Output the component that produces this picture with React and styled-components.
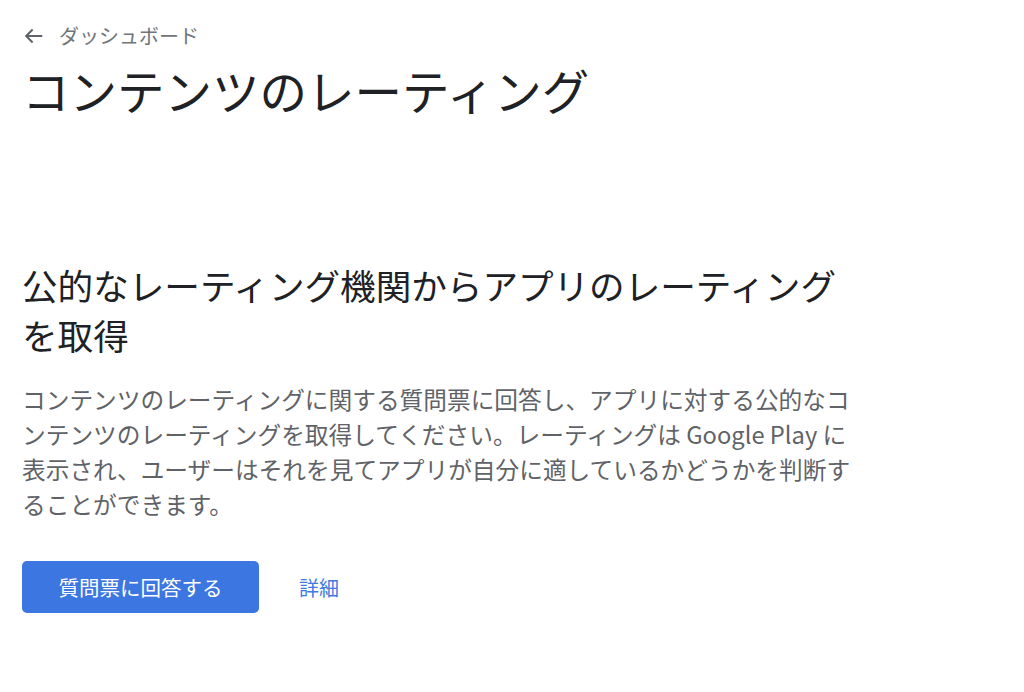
import React from 'react';
import styled, { createGlobalStyle } from 'styled-components';

const GlobalStyle = createGlobalStyle`
  html, body {
    margin: 0;
    padding: 0;
    background: #ffffff;
  }
  body {
    font-family: "Noto Sans CJK JP", "Noto Sans", sans-serif;
    color: #202124;
  }
`;

const Page = styled.main`
  padding: 24px 22px 0;
  display: flex;
  flex-direction: column;
`;

const Breadcrumb = styled.a`
  display: flex;
  align-items: center;
  gap: 14px;
  height: 24px;
  font-size: 20px;
  line-height: 24px;
  color: #70757a;
  text-decoration: none;
  svg {
    margin-left: 1px;
  }
`;

const Title = styled.h1`
  margin: 14px 0 0;
  font-size: 47.5px;
  line-height: 56px;
  font-weight: 400;
  color: #202124;
`;

const Section = styled.section`
  margin-top: 142px;
  max-width: 840px;
`;

const Heading = styled.h2`
  margin: 0;
  max-width: 835px;
  font-size: 35.6px;
  line-height: 50px;
  font-weight: 400;
  color: #202124;
`;

const Body = styled.p`
  margin: 22px 0 0;
  font-size: 23.7px;
  line-height: 35px;
  color: #5f6368;
`;

const Actions = styled.div`
  margin-top: 39px;
  display: flex;
  align-items: center;
  gap: 40px;
`;

const PrimaryButton = styled.button`
  width: 237px;
  height: 52px;
  border: none;
  border-radius: 5px;
  background: #3b76e1;
  color: #ffffff;
  font-family: inherit;
  font-size: 20.5px;
  cursor: pointer;
`;

const TextLink = styled.a`
  font-size: 20px;
  color: #3f7ae0;
  text-decoration: none;
`;

const BackArrow = () => (
  <svg width="22" height="22" viewBox="0 0 24 24" fill="none" stroke="#5f6368" strokeWidth="2.2">
    <path d="M21 12H3.5" />
    <path d="M10.5 5l-7 7 7 7" />
  </svg>
);

export default function App() {
  return (
    <>
      <GlobalStyle />
      <Page>
        <Breadcrumb href="#">
          <BackArrow />
          ダッシュボード
        </Breadcrumb>
        <Title>コンテンツのレーティング</Title>
        <Section>
          <Heading>公的なレーティング機関からアプリのレーティングを取得</Heading>
          <Body>
            コンテンツのレーティングに関する質問票に回答し、アプリに対する公的なコンテンツのレーティングを取得してください。レーティングは Google Play に表示され、ユーザーはそれを見てアプリが自分に適しているかどうかを判断することができます。
          </Body>
          <Actions>
            <PrimaryButton>質問票に回答する</PrimaryButton>
            <TextLink href="#">詳細</TextLink>
          </Actions>
        </Section>
      </Page>
    </>
  );
}
